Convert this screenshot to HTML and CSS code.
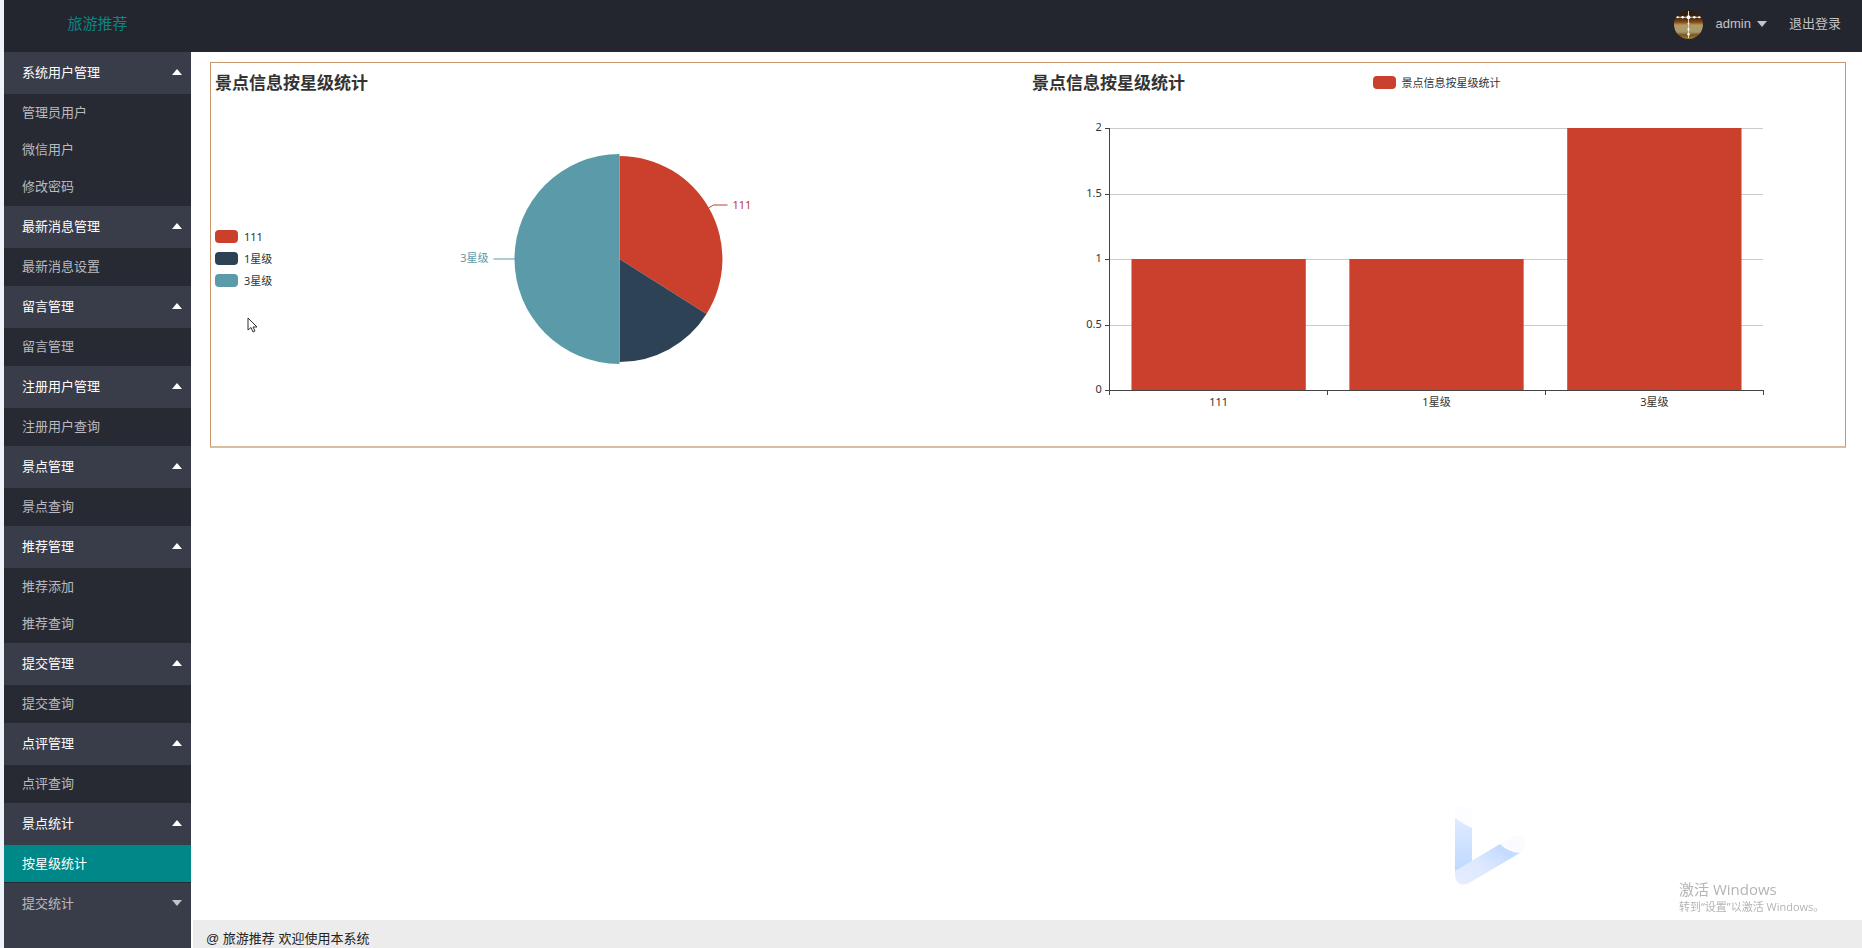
FILE: index.html
```html
<!DOCTYPE html>
<html lang="zh-CN">
<head>
<meta charset="UTF-8">
<meta name="viewport" content="width=device-width, initial-scale=1.0">
<title>旅游推荐</title>
<link rel="stylesheet" href="styles.css">
</head>
<body>
<div class="layout">
  <header class="header">
    <div class="logo">旅游推荐</div>
    <div class="header-right">
      <button type="button" class="user">
        <svg class="avatar" viewBox="0 0 30 30" aria-hidden="true">
          <defs>
            <linearGradient id="sky" x1="0" y1="0" x2="0" y2="1">
              <stop offset="0" stop-color="#2a1c16"/>
              <stop offset="0.25" stop-color="#3a2212"/>
              <stop offset="0.42" stop-color="#8a4a12"/>
              <stop offset="0.52" stop-color="#b09a68"/>
              <stop offset="0.76" stop-color="#a89a6c"/>
              <stop offset="0.86" stop-color="#7a5518"/>
              <stop offset="1" stop-color="#a08038"/>
            </linearGradient>
          </defs>
          <circle cx="15" cy="15" r="15" fill="url(#sky)"/>
          <path d="M2 7.5H28M15 1V29" stroke="#e8dcc4" stroke-width="1"/>
          <g fill="#fff">
            <circle cx="15" cy="7.5" r="2"/>
            <circle cx="4" cy="7.5" r="1"/><circle cx="9" cy="7.5" r="1.3"/>
            <circle cx="21" cy="7.5" r="1.3"/><circle cx="26" cy="7.5" r="1"/>
            <circle cx="15" cy="14" r="1"/><circle cx="15" cy="20" r="1.2"/><circle cx="15" cy="25" r="1.3"/>
          </g>
        </svg>
        <span>admin</span>
        <i class="caret"></i>
      </button>
      <a href="#">退出登录</a>
    </div>
  </header>

  <nav class="side">
    <details open>
      <summary>系统用户管理<i class="caret"></i></summary>
      <div class="sub"><a href="#">管理员用户</a><a href="#">微信用户</a><a href="#">修改密码</a></div>
    </details>
    <details open>
      <summary>最新消息管理<i class="caret"></i></summary>
      <div class="sub"><a href="#">最新消息设置</a></div>
    </details>
    <details open>
      <summary>留言管理<i class="caret"></i></summary>
      <div class="sub"><a href="#">留言管理</a></div>
    </details>
    <details open>
      <summary>注册用户管理<i class="caret"></i></summary>
      <div class="sub"><a href="#">注册用户查询</a></div>
    </details>
    <details open>
      <summary>景点管理<i class="caret"></i></summary>
      <div class="sub"><a href="#">景点查询</a></div>
    </details>
    <details open>
      <summary>推荐管理<i class="caret"></i></summary>
      <div class="sub"><a href="#">推荐添加</a><a href="#">推荐查询</a></div>
    </details>
    <details open>
      <summary>提交管理<i class="caret"></i></summary>
      <div class="sub"><a href="#">提交查询</a></div>
    </details>
    <details open>
      <summary>点评管理<i class="caret"></i></summary>
      <div class="sub"><a href="#">点评查询</a></div>
    </details>
    <details open>
      <summary>景点统计<i class="caret"></i></summary>
      <div class="sub"><a href="#" class="active">按星级统计</a></div>
    </details>
    <details>
      <summary>提交统计<i class="caret"></i></summary>
    </details>
  </nav>

  <main class="main">
    <div class="charts">
      <!-- pie chart -->
      <section class="chart">
        <div class="chart-head"><h3>景点信息按星级统计</h3></div>
        <div class="pie">
          <svg class="plot" role="img" aria-label="景点信息按星级统计">
            <svg x="50%" y="156" overflow="visible">
              <path class="red" d="M0 0V-103A103 103 0 0 1 87 55Z"/>
              <path class="navy" d="M0 0L87 55A103 103 0 0 1 0 103Z"/>
              <path class="teal" d="M0 -105A105 105 0 0 0 0 105Z"/>
              <path class="lead-red" d="M89 -51L94 -54H108"/>
              <path class="lead-teal" d="M-104 0H-126"/>
              <text class="text-red" x="113" y="-50">111</text>
              <text class="text-teal" x="-131" y="3" text-anchor="end">3星级</text>
            </svg>
          </svg>
          <ul class="legend">
            <li><i class="bg-red"></i>111</li>
            <li><i class="bg-navy"></i>1星级</li>
            <li><i class="bg-teal"></i>3星级</li>
          </ul>
        </div>
      </section>

      <!-- bar chart -->
      <section class="chart">
        <div class="chart-head">
          <h3>景点信息按星级统计</h3>
          <ul class="legend"><li><i class="bg-red"></i>景点信息按星级统计</li></ul>
        </div>
        <svg class="plot" role="img" aria-label="景点信息按星级统计">
          <svg x="10%" width="80%" overflow="visible">
            <g class="grid">
              <line x1="0" x2="100%" y1="25" y2="25"/>
              <line x1="0" x2="100%" y1="91" y2="91"/>
              <line x1="0" x2="100%" y1="156" y2="156"/>
              <line x1="0" x2="100%" y1="222" y2="222"/>
            </g>
            <g class="red">
              <rect x="3.333%" y="156" width="26.667%" height="131"/>
              <rect x="36.667%" y="156" width="26.667%" height="131"/>
              <rect x="70%" y="25" width="26.667%" height="262"/>
            </g>
            <g class="axis">
              <line x1="0" x2="0" y1="25" y2="287"/>
              <line x1="-5" x2="100%" y1="287" y2="287"/>
              <line x1="-5" x2="0" y1="25" y2="25"/>
              <line x1="-5" x2="0" y1="91" y2="91"/>
              <line x1="-5" x2="0" y1="156" y2="156"/>
              <line x1="-5" x2="0" y1="222" y2="222"/>
              <line x1="0" x2="0" y1="287" y2="292"/>
              <line x1="33.333%" x2="33.333%" y1="287" y2="292"/>
              <line x1="66.667%" x2="66.667%" y1="287" y2="292"/>
              <line x1="100%" x2="100%" y1="287" y2="292"/>
            </g>
            <g text-anchor="end">
              <text x="-8" y="28">2</text>
              <text x="-8" y="94">1.5</text>
              <text x="-8" y="159">1</text>
              <text x="-8" y="225">0.5</text>
              <text x="-8" y="290">0</text>
            </g>
            <g text-anchor="middle">
              <text x="16.667%" y="303">111</text>
              <text x="50%" y="303">1星级</text>
              <text x="83.333%" y="303">3星级</text>
            </g>
          </svg>
        </svg>
      </section>
    </div>
    <footer class="footer">@ 旅游推荐 欢迎使用本系统</footer>
  </main>
</div>

<svg class="bird" viewBox="0 0 72 80" aria-hidden="true">
  <defs>
    <linearGradient id="stem" x1="0" y1="0" x2="0" y2="1">
      <stop offset="0" stop-color="#dfebff"/>
      <stop offset="1" stop-color="#bcd8ff"/>
    </linearGradient>
    <linearGradient id="wing" x1="0" y1="1" x2="1" y2="0">
      <stop offset="0" stop-color="#e6eeff"/>
      <stop offset="0.45" stop-color="#dde8ff"/>
      <stop offset="0.8" stop-color="#c3dbff"/>
      <stop offset="1" stop-color="#d6e6ff"/>
    </linearGradient>
  </defs>
  <path d="M0 1Q9 -2 17 3V22L0 12Z" fill="#fdfdff"/>
  <path d="M45 38L60 30Q72 28 70 40L65 47Z" fill="#fbfbff"/>
  <path d="M0 12Q8 18 17 22V56L0 68Z" fill="url(#stem)"/>
  <path d="M0 65L45 38Q53 46 65 47L14 77Q2 82 0 70Z" fill="url(#wing)"/>
</svg>

<div class="watermark">
  <p class="watermark-title">激活 Windows</p>
  <p>转到“设置”以激活 Windows。</p>
</div>

<svg class="cursor" viewBox="0 0 12 17" aria-hidden="true">
  <path d="M1 1V13L4 10.500L6 15L8 14L6 10H10Z" fill="#fff" stroke="#333" stroke-width="1"/>
</svg>
</body>
</html>
```

FILE: styles.css
```css
* { box-sizing: border-box; }

body {
  margin: 0;
  font-family: "Liberation Sans", "Noto Sans CJK SC", sans-serif;
  font-size: 13px;
  color: #222;
  background: #fff;
}

a { color: inherit; text-decoration: none; }
h3, p, ul { margin: 0; padding: 0; }
ul { list-style: none; }

.layout {
  display: grid;
  grid-template-columns: 187px 1fr;
  grid-template-rows: 52px 1fr;
  height: 100vh;
  overflow: hidden;
  border-left: 4px solid #eef3f9;
}

/* Header */
.header {
  grid-column: 1 / 3;
  display: flex;
  justify-content: space-between;
  line-height: 48px;
  background: #23262e;
  color: #c3c4c7;
}
.logo {
  width: 187px;
  text-align: center;
  font-size: 15px;
  color: #0b8585;
}
.header-right {
  display: flex;
  gap: 22px;
  padding-right: 21px;
}
.user {
  display: flex;
  align-items: center;
  height: 48px;
  padding: 0;
  border: 0;
  background: none;
  color: inherit;
  font: inherit;
  cursor: pointer;
}
.avatar { width: 29px; height: 29px; margin-right: 13px; }
.user .caret { margin-left: 6px; }

.caret {
  border: 5px solid transparent;
  border-top: 6px solid #c3c4c7;
  border-bottom: 0;
}

/* Side menu */
.side { background: #393d49; color: #b9bbc0; }
.side summary {
  display: flex;
  align-items: center;
  justify-content: space-between;
  height: 42px;
  padding: 0 9px 3px 18px;
  list-style: none;
  cursor: pointer;
}
.side details[open] summary { color: #fff; }
.side details[open] .caret {
  border-top: 0;
  border-bottom: 6px solid #fff;
}
.sub { padding-bottom: 1px; background: #272a32; }
.sub a {
  display: block;
  padding-left: 18px;
  line-height: 37px;
}
.sub .active { background: #008788; color: #fff; }

/* Content */
.main {
  display: flex;
  flex-direction: column;
  justify-content: space-between;
  padding-left: 2px;
}
.charts {
  display: grid;
  grid-template-columns: 1fr 1fr;
  margin: 10px 16px 0 17px;
  border: 1px solid #c9976f;
  border-bottom: 2px solid #d6bea0;
}
.chart {
  font-family: "Noto Sans", "Noto Sans CJK SC", sans-serif;
  font-size: 11px;
  color: #333;
}
.chart-head {
  display: grid;
  grid-template-columns: 1fr auto 1fr;
  align-items: center;
  height: 40px;
  padding: 0 4px;
}
.chart-head h3 { font-size: 17px; line-height: 24px; }
.chart-head .legend { padding-bottom: 2px; }

.pie { display: grid; align-items: center; }
.pie .plot, .pie .legend { grid-area: 1 / 1; }
.pie .legend { justify-self: start; padding: 0 0 33px 4px; }

.legend { display: grid; gap: 9px; }
.legend li {
  display: flex;
  align-items: center;
  gap: 6px;
  line-height: 13px;
}
.legend i { width: 23px; height: 13px; border-radius: 4px; }
.bg-red { background: #ca402c; }
.bg-navy { background: #2d4254; }
.bg-teal { background: #5a9aa9; }

.plot { display: block; width: 100%; height: 343px; fill: #333; }
.red { fill: #ca402c; }
.navy { fill: #2d4254; }
.teal { fill: #5a9aa9; }
.text-red { fill: #b8402f; }
.text-teal { fill: #5a9aa9; }
.lead-red { fill: none; stroke: #b8402f; }
.lead-teal { fill: none; stroke: #5a9aa9; }
.grid { stroke: #ccc; shape-rendering: crispEdges; }
.axis { stroke: #444; shape-rendering: crispEdges; }

.footer {
  height: 28px;
  padding: 10px 13px 0;
  line-height: 18px;
  overflow: hidden;
  background: #ececec;
}

/* Things floating over the page */
.bird {
  position: fixed;
  right: 335px;
  bottom: 62px;
  width: 72px;
  height: 80px;
}
.watermark {
  position: fixed;
  right: 36px;
  bottom: 32px;
  width: 147px;
  font-family: "Open Sans", "Noto Sans CJK SC", sans-serif;
  font-size: 11px;
  line-height: 18px;
  white-space: nowrap;
  color: #b4b4b4;
}
.watermark-title { font-size: 15px; }
.cursor {
  position: fixed;
  left: 247px;
  top: 317px;
  width: 12px;
  height: 17px;
}
```
